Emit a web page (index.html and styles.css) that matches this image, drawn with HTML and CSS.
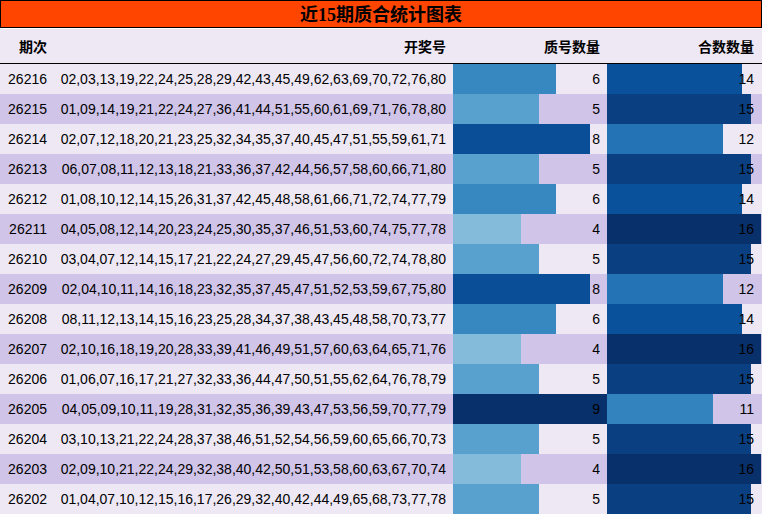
FILE: index.html
```html
<!DOCTYPE html>
<html lang="zh">
<head>
<meta charset="utf-8">
<title>近15期质合统计图表</title>
<link rel="stylesheet" href="styles.css">
</head>
<body>
<div class="chart">
  <div class="title">近<span class="num">15</span>期质合统计图表</div>
  <div class="row head">
    <div class="cell">期次</div>
    <div class="cell">开奖号</div>
    <div class="cell">质号数量</div>
    <div class="cell">合数数量</div>
  </div>
  <div class="row odd"><div class="cell">26216</div><div class="cell">02,03,13,19,22,24,25,28,29,42,43,45,49,62,63,69,70,72,76,80</div><div class="cell bar"><i style="width:102.7px;background:#3787c0"></i><span>6</span></div><div class="cell bar"><i style="width:134.8px;background:#0a519b"></i><span>14</span></div></div>
  <div class="row even"><div class="cell">26215</div><div class="cell">01,09,14,19,21,22,24,27,36,41,44,51,55,60,61,69,71,76,78,80</div><div class="cell bar"><i style="width:85.6px;background:#58a1cf"></i><span>5</span></div><div class="cell bar"><i style="width:144.4px;background:#0a4082"></i><span>15</span></div></div>
  <div class="row odd"><div class="cell">26214</div><div class="cell">02,07,12,18,20,21,23,25,32,34,35,37,40,45,47,51,55,59,61,71</div><div class="cell bar"><i style="width:136.9px;background:#0a4e97"></i><span>8</span></div><div class="cell bar"><i style="width:115.5px;background:#2373b5"></i><span>12</span></div></div>
  <div class="row even"><div class="cell">26213</div><div class="cell">06,07,08,11,12,13,18,21,33,36,37,42,44,56,57,58,60,66,71,80</div><div class="cell bar"><i style="width:85.6px;background:#58a1cf"></i><span>5</span></div><div class="cell bar"><i style="width:144.4px;background:#0a4082"></i><span>15</span></div></div>
  <div class="row odd"><div class="cell">26212</div><div class="cell">01,08,10,12,14,15,26,31,37,42,45,48,58,61,66,71,72,74,77,79</div><div class="cell bar"><i style="width:102.7px;background:#3787c0"></i><span>6</span></div><div class="cell bar"><i style="width:134.8px;background:#0a519b"></i><span>14</span></div></div>
  <div class="row even"><div class="cell">26211</div><div class="cell">04,05,08,12,14,20,23,24,25,30,35,37,46,51,53,60,74,75,77,78</div><div class="cell bar"><i style="width:68.4px;background:#84bbdb"></i><span>4</span></div><div class="cell bar"><i style="width:154px;background:#08306b"></i><span>16</span></div></div>
  <div class="row odd"><div class="cell">26210</div><div class="cell">03,04,07,12,14,15,17,21,22,24,27,29,45,47,56,60,72,74,78,80</div><div class="cell bar"><i style="width:85.6px;background:#58a1cf"></i><span>5</span></div><div class="cell bar"><i style="width:144.4px;background:#0a4082"></i><span>15</span></div></div>
  <div class="row even"><div class="cell">26209</div><div class="cell">02,04,10,11,14,16,18,23,32,35,37,45,47,51,52,53,59,67,75,80</div><div class="cell bar"><i style="width:136.9px;background:#0a4e97"></i><span>8</span></div><div class="cell bar"><i style="width:115.5px;background:#2373b5"></i><span>12</span></div></div>
  <div class="row odd"><div class="cell">26208</div><div class="cell">08,11,12,13,14,15,16,23,25,28,34,37,38,43,45,48,58,70,73,77</div><div class="cell bar"><i style="width:102.7px;background:#3787c0"></i><span>6</span></div><div class="cell bar"><i style="width:134.8px;background:#0a519b"></i><span>14</span></div></div>
  <div class="row even"><div class="cell">26207</div><div class="cell">02,10,16,18,19,20,28,33,39,41,46,49,51,57,60,63,64,65,71,76</div><div class="cell bar"><i style="width:68.4px;background:#84bbdb"></i><span>4</span></div><div class="cell bar"><i style="width:154px;background:#08306b"></i><span>16</span></div></div>
  <div class="row odd"><div class="cell">26206</div><div class="cell">01,06,07,16,17,21,27,32,33,36,44,47,50,51,55,62,64,76,78,79</div><div class="cell bar"><i style="width:85.6px;background:#58a1cf"></i><span>5</span></div><div class="cell bar"><i style="width:144.4px;background:#0a4082"></i><span>15</span></div></div>
  <div class="row even"><div class="cell">26205</div><div class="cell">04,05,09,10,11,19,28,31,32,35,36,39,43,47,53,56,59,70,77,79</div><div class="cell bar"><i style="width:154px;background:#08306b"></i><span>9</span></div><div class="cell bar"><i style="width:105.9px;background:#3383be"></i><span>11</span></div></div>
  <div class="row odd"><div class="cell">26204</div><div class="cell">03,10,13,21,22,24,28,37,38,46,51,52,54,56,59,60,65,66,70,73</div><div class="cell bar"><i style="width:85.6px;background:#58a1cf"></i><span>5</span></div><div class="cell bar"><i style="width:144.4px;background:#0a4082"></i><span>15</span></div></div>
  <div class="row even"><div class="cell">26203</div><div class="cell">02,09,10,21,22,24,29,32,38,40,42,50,51,53,58,60,63,67,70,74</div><div class="cell bar"><i style="width:68.4px;background:#84bbdb"></i><span>4</span></div><div class="cell bar"><i style="width:154px;background:#08306b"></i><span>16</span></div></div>
  <div class="row odd"><div class="cell">26202</div><div class="cell">01,04,07,10,12,15,16,17,26,29,32,40,42,44,49,65,68,73,77,78</div><div class="cell bar"><i style="width:85.6px;background:#58a1cf"></i><span>5</span></div><div class="cell bar"><i style="width:144.4px;background:#0a4082"></i><span>15</span></div></div>
</div>
</body>
</html>
```

FILE: styles.css
```css
html, body {
  margin: 0;
  padding: 0;
  background: #ffffff;
}
.chart {
  width: 762px;
  font-family: "Liberation Sans", "Noto Sans CJK SC", sans-serif;
  font-size: 14px;
  color: #000;
}
.title {
  box-sizing: border-box;
  height: 28px;
  border: 1px solid #000;
  background: #ff4500;
  text-align: center;
  font-family: "Noto Sans CJK SC", sans-serif;
  font-weight: bold;
  font-size: 18px;
  line-height: 25px;
  margin-bottom: 1px;
}
.title .num {
  font-family: "Liberation Serif", serif;
  font-weight: bold;
}
.row {
  display: grid;
  grid-template-columns: 54px 399px 154px 154px 1px;
  height: 30px;
  align-items: center;
}
.row.head {
  height: 34px;
  background: #eee8f5;
  border-bottom: 1px solid #000;
  font-family: "Noto Sans CJK SC", sans-serif;
  font-weight: bold;
  font-size: 14px;
}
.row.odd { background: #eee8f5; }
.row.even { background: #d0c4e8; }
.cell {
  text-align: right;
  padding-right: 7px;
  white-space: nowrap;
}
.cell.bar {
  position: relative;
  height: 100%;
  padding-right: 0;
}
.cell.bar i {
  position: absolute;
  left: 0;
  top: 0;
  bottom: 0;
}
.cell.bar span {
  position: absolute;
  right: 7px;
  top: 0;
  line-height: 30px;
}
```
